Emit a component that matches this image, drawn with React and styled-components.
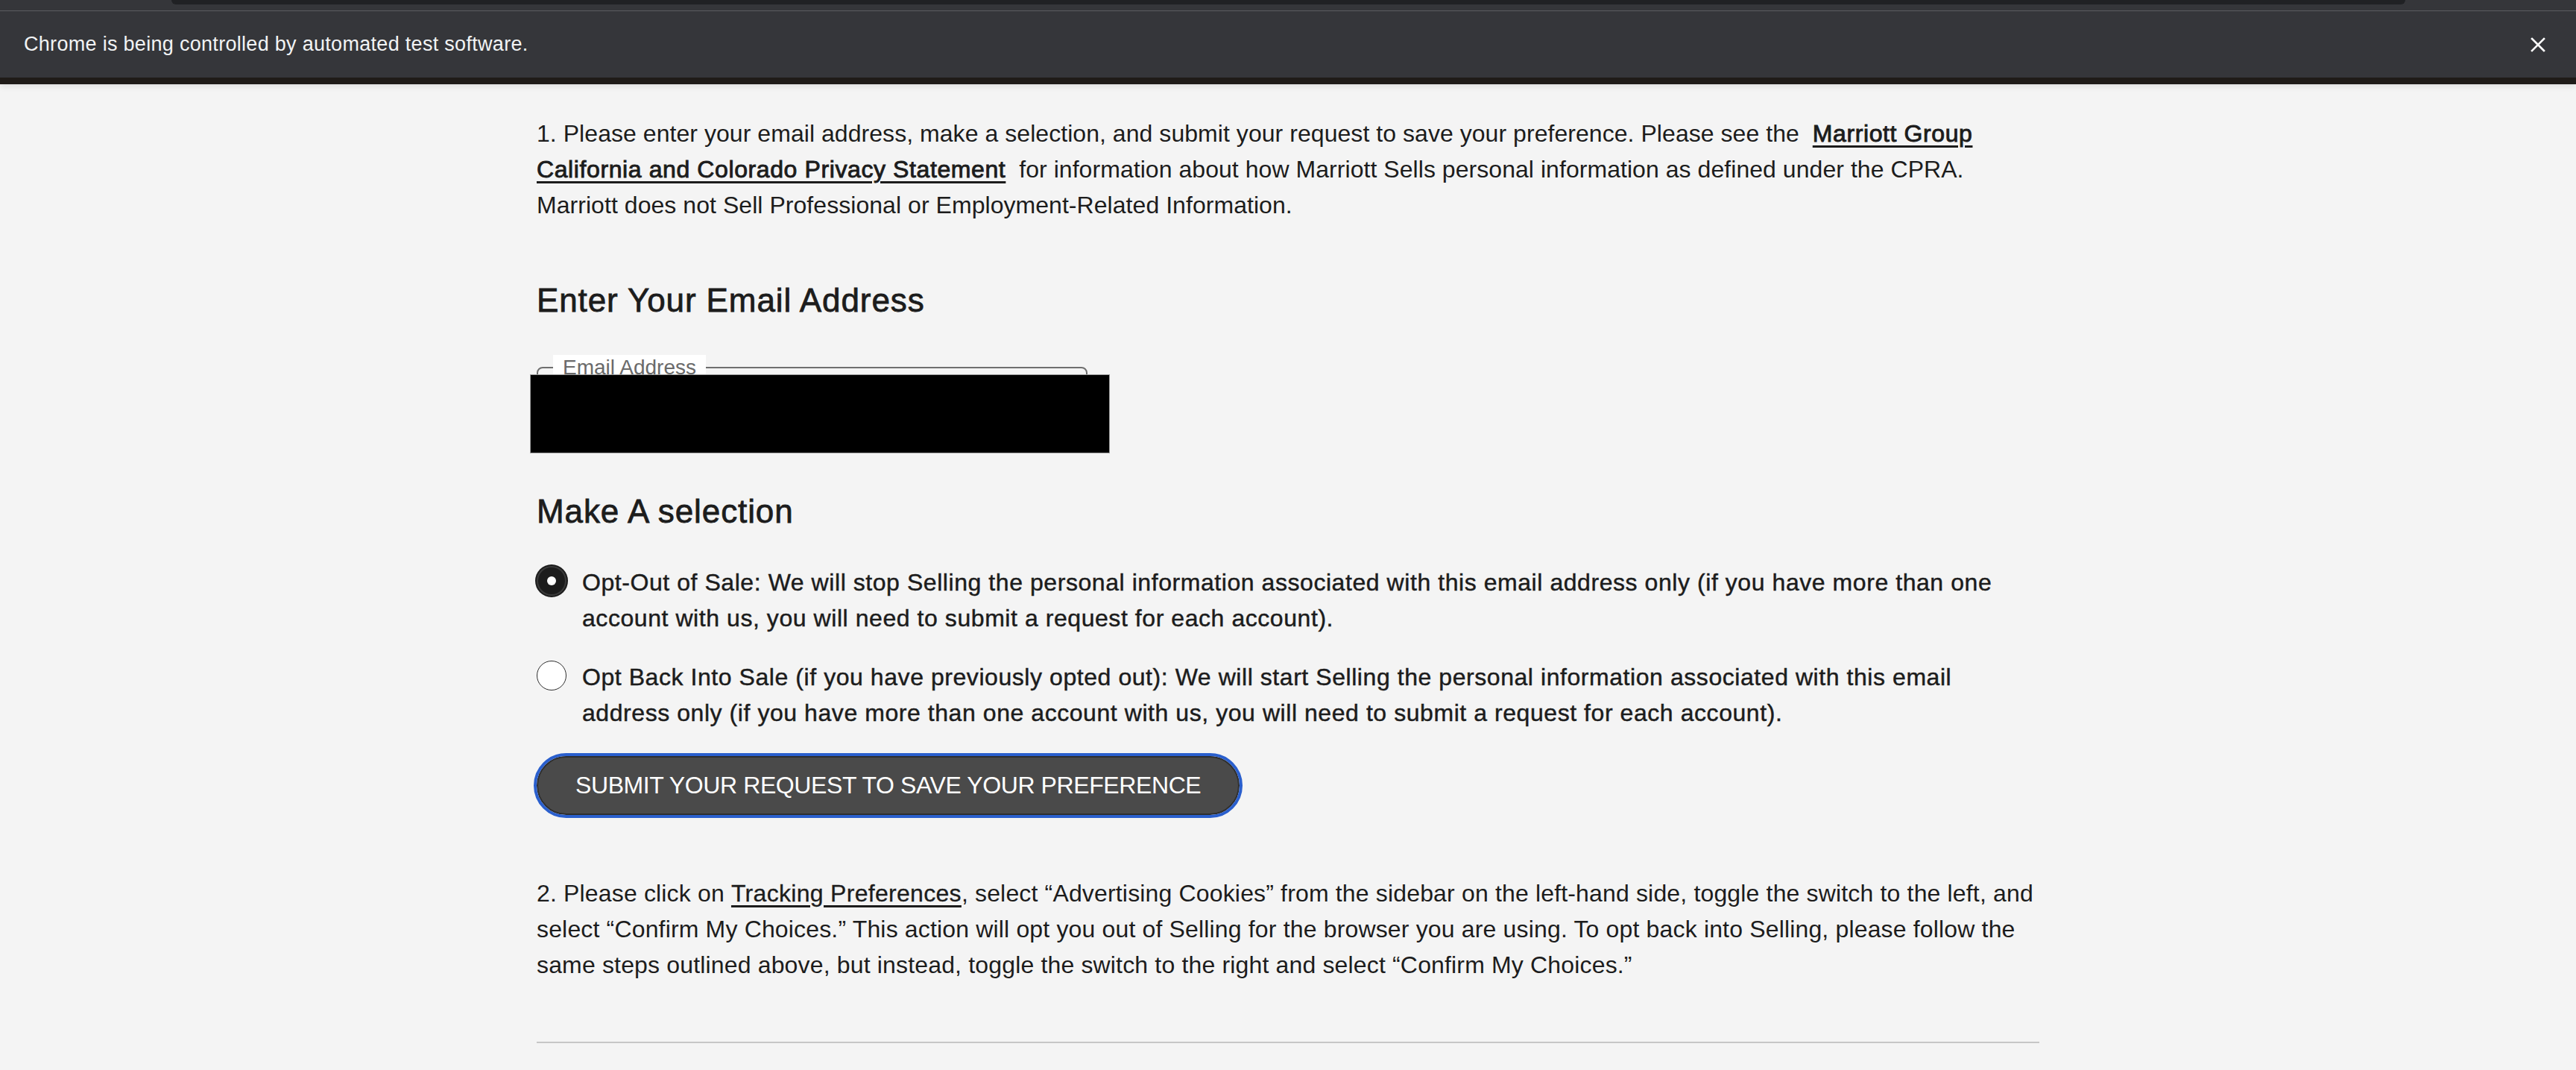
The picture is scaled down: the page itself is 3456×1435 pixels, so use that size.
import React from "react";
import styled, { createGlobalStyle, css } from "styled-components";

const GlobalStyle = createGlobalStyle`
  html, body {
    margin: 0;
    padding: 0;
    background: #f4f4f4;
  }
  body {
    font-family: "Liberation Sans", Arial, Helvetica, sans-serif;
    color: #1c1c1c;
  }
  * { box-sizing: border-box; }
`;

/* Helvetica-Neue-Medium-like treatment on top of Liberation Sans regular */
const medium = css`
  font-weight: 400;
  -webkit-text-stroke: 0.45px currentColor;
  letter-spacing: 0.56px;
`;

const Shell = styled.div`
  min-height: 1435px;
  background: #f4f4f4;
`;

/* ---------- Chrome automation info bar ---------- */
const BrowserChrome = styled.header`
  position: relative;
  z-index: 1;
  box-shadow: 0 3px 8px rgba(0, 0, 0, 0.09);
`;

const TabStrip = styled.div`
  height: 14px;
  background: #35363a;
  padding: 0 229px 0 230px;
`;

const TabEdge = styled.div`
  height: 6px;
  background: #202124;
  border-radius: 0 0 20px 20px;
`;

const StripLine = styled.div`
  height: 1px;
  background: #5c5d61;
`;

const InfoBar = styled.div`
  height: 89px;
  background: #35363a;
  display: flex;
  align-items: center;
  justify-content: space-between;
  padding: 0 39px 0 32px;
  color: #f1f3f4;
  font-size: 27px;
  letter-spacing: 0.3px;
`;

const CloseButton = styled.button`
  display: flex;
  align-items: center;
  justify-content: center;
  width: 24px;
  height: 24px;
  padding: 0;
  border: none;
  background: transparent;
  color: #ffffff;
`;

const BottomEdge = styled.div`
  height: 9px;
  background: #1f1b18;
`;

/* ---------- Page content ---------- */
const Content = styled.main`
  width: 2016px;
  margin: 0 auto;
  padding-top: 42px;
`;

const Paragraph = styled.p`
  margin: ${(p) => p.$top || 0}px 0 0;
  font-size: 32px;
  line-height: 48px;
  letter-spacing: ${(p) => p.$spacing || 0}px;
  color: #1c1c1c;
`;

const TextLink = styled.a`
  color: #1c1c1c;
  text-decoration: underline;
  text-decoration-thickness: 3px;
  text-underline-offset: 5px;
  cursor: pointer;
  ${medium}
  -webkit-text-stroke: ${(p) => (p.$strong ? "0.9px" : "0.3px")} currentColor;
  letter-spacing: ${(p) => (p.$strong ? "0.6px" : "0.3px")};
`;

const SectionTitle = styled.h2`
  margin: ${(p) => p.$top}px 0 0;
  font-size: 44px;
  line-height: 52.8px;
  font-weight: 400;
  -webkit-text-stroke: 0.8px #1c1c1c;
  letter-spacing: 0.9px;
  color: #1c1c1c;
`;

const EmailField = styled.div`
  position: relative;
  width: 739px;
  margin-top: 46px;
`;

const Fieldset = styled.fieldset`
  margin: 0;
  height: 124px;
  padding: 0 20px;
  border: 2px solid #6f6f6f;
  border-radius: 8px;
`;

const Legend = styled.legend`
  padding: 0 13px;
  background: #ffffff;
  font-size: 28px;
  line-height: 33.6px;
  color: #6a6a6a;
`;

const EmailInput = styled.input`
  width: 100%;
  height: 80px;
  border: none;
  background: transparent;
  font-family: inherit;
  font-size: 32px;
`;

const Redaction = styled.div`
  position: absolute;
  left: -9px;
  top: 26px;
  width: 778px;
  height: 106px;
  background: #000000;
  border: 1px solid #9c9c9c;
`;

const RadioGroup = styled.div`
  display: flex;
  flex-direction: column;
  gap: 31px;
  margin-top: 44px;
`;

const RadioOption = styled.label`
  display: flex;
  align-items: flex-start;
  gap: 21px;
  cursor: pointer;
`;

const RadioDot = styled.span`
  flex: none;
  position: relative;
  width: 40px;
  height: 40px;
  margin-top: 2px;
  border-radius: 50%;
  background: ${(p) => (p.$checked ? "#1c1c1c" : "#ffffff")};
  border: ${(p) => (p.$checked ? "none" : "1.5px solid #2e2e2e")};
  box-shadow: ${(p) => (p.$checked ? "0 0 0 2px #1c1c1c, inset 0 0 0 2px #3a3a3a" : "none")};

  &::after {
    content: "";
    display: ${(p) => (p.$checked ? "block" : "none")};
    position: absolute;
    left: 50%;
    top: 50%;
    width: 12px;
    height: 12px;
    margin: -6px 0 0 -6px;
    border-radius: 50%;
    background: #ffffff;
  }
`;

const OptionText = styled.span`
  font-size: 32px;
  line-height: 48px;
  color: #1c1c1c;
  ${medium}
`;

const SubmitButton = styled.button`
  display: inline-flex;
  align-items: center;
  margin-top: 34px;
  height: 79px;
  padding: 0 50px;
  border: 2px solid #2e2e2e;
  border-radius: 40px;
  outline: 4px solid #2a5fcd;
  background: #4a4a4a;
  color: #ffffff;
  font-family: inherit;
  font-size: 32px;
  letter-spacing: -0.4px;
  cursor: pointer;
`;

const Rule = styled.hr`
  margin: 79px 0 0;
  height: 2px;
  border: none;
  background: #c6c6c6;
`;

const CloseIcon = () => (
  <svg width="20" height="20" viewBox="0 0 20 20" fill="none">
    <path d="M2 2 L18 18 M18 2 L2 18" stroke="currentColor" strokeWidth="2.6" strokeLinecap="square" />
  </svg>
);

export default function App() {
  return (
    <Shell>
      <GlobalStyle />
      <BrowserChrome>
        <TabStrip>
          <TabEdge />
        </TabStrip>
        <StripLine />
        <InfoBar>
          <span>Chrome is being controlled by automated test software.</span>
          <CloseButton aria-label="Close">
            <CloseIcon />
          </CloseButton>
        </InfoBar>
        <BottomEdge />
      </BrowserChrome>

      <Content>
        <Paragraph $spacing={0.05}>
          1. Please enter your email address, make a selection, and submit your request to save your
          preference. Please see the&nbsp;{" "}
          <TextLink $strong>Marriott Group California and Colorado Privacy Statement</TextLink>
          &nbsp; for information about how Marriott Sells personal information as defined under the
          CPRA. Marriott does not Sell Professional or Employment-Related Information.
        </Paragraph>

        <SectionTitle $top={78}>Enter Your Email Address</SectionTitle>

        <EmailField>
          <Fieldset>
            <Legend>Email Address</Legend>
            <EmailInput type="email" aria-label="Email Address" />
          </Fieldset>
          <Redaction />
        </EmailField>

        <SectionTitle $top={60}>Make A selection</SectionTitle>

        <RadioGroup>
          <RadioOption>
            <RadioDot $checked />
            <OptionText>
              Opt-Out of Sale: We will stop Selling the personal information associated with this email
              address only (if you have more than one account with us, you will need to submit a request
              for each account).
            </OptionText>
          </RadioOption>
          <RadioOption>
            <RadioDot />
            <OptionText>
              Opt Back Into Sale (if you have previously opted out): We will start Selling the personal
              information associated with this email address only (if you have more than one account with
              us, you will need to submit a request for each account).
            </OptionText>
          </RadioOption>
        </RadioGroup>

        <SubmitButton type="button">SUBMIT YOUR REQUEST TO SAVE YOUR PREFERENCE</SubmitButton>

        <Paragraph $top={81} $spacing={0.16}>
          2. Please click on <TextLink>Tracking Preferences</TextLink>, select “Advertising Cookies” from
          the sidebar on the left-hand side, toggle the switch to the left, and select “Confirm My
          Choices.” This action will opt you out of Selling for the browser you are using. To opt back
          into Selling, please follow the same steps outlined above, but instead, toggle the switch to
          the right and select “Confirm My Choices.”
        </Paragraph>

        <Rule />
      </Content>
    </Shell>
  );
}
